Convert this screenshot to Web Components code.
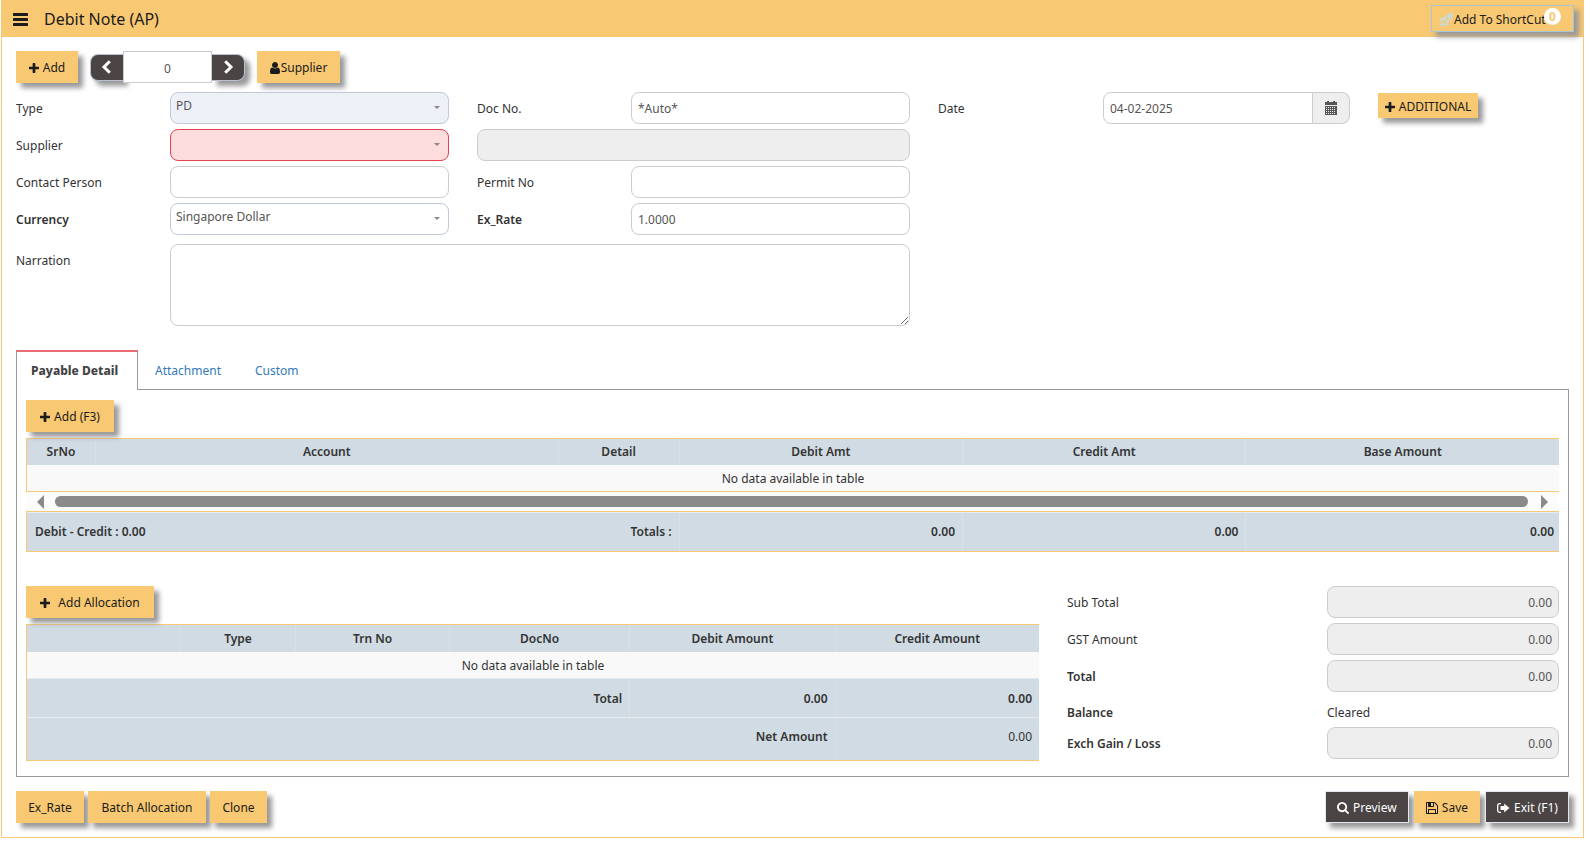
<!DOCTYPE html>
<html lang="en">
<head>
<meta charset="utf-8">
<title>Debit Note (AP)</title>
<style>
  html, body { margin: 0; background: #fff; }
  body { padding: 0 6px 0 1px; font: 12px/16px "Noto Sans", "Open Sans", sans-serif; color: #333; }
</style>
</head>
<body>
<debit-note-page></debit-note-page>

<script>
const define = (name, html, setup) => {
  const template = document.createElement('template');
  template.innerHTML = `<style>*{box-sizing:border-box}:host{box-sizing:border-box}</style>` + html;
  customElements.define(name, class extends HTMLElement {
    constructor() {
      super();
      this.attachShadow({ mode: 'open' }).append(template.content.cloneNode(true));
    }
    connectedCallback() { if (setup) setup(this, this.shadowRoot); }
  });
};

/* name: [viewBox, shapes, drawn width] */
const ICONS = {
  plus: ['192 64 1408 1536', '<path d="M1600 736v192q0 40-28 68t-68 28h-416v416q0 40-28 68t-68 28h-192q-40 0-68-28t-28-68v-416h-416q-40 0-68-28t-28-68v-192q0-40 28-68t68-28h416v-416q0-40 28-68t68-28h192q40 0 68 28t28 68v416h416q40 0 68 28t28 68z"/>', 10],
  bars: ['0 0 18 18', '<rect x="1" y="3" width="15" height="3" rx=".5"/><rect x="1" y="8" width="15" height="3" rx=".5"/><rect x="1" y="13" width="15" height="3" rx=".5"/>'],
  user: ['256 128 1280 1536', '<path d="M1536 1399q0 109-62.5 187t-150.5 78h-854q-88 0-150.5-78t-62.5-187q0-85 8.5-160.5t31.5-152 58.5-131 94-89 134.5-34.5q131 128 313 128t313-128q76 0 134.5 34.5t94 89 58.5 131 31.5 152 8.5 160.5zm-256-887q0 159-112.5 271.5t-271.5 112.5-271.5-112.5-112.5-271.5 112.5-271.5 271.5-112.5 271.5 112.5 112.5 271.5z"/>', 10],
  search: ['64 128 1664 1664', '<path d="M1216 832q0-185-131.5-316.5t-316.5-131.5-316.5 131.5-131.5 316.5 131.5 316.5 316.5 131.5 316.5-131.5 131.5-316.5zm512 832q0 52-38 90t-90 38q-54 0-90-38l-343-342q-179 124-399 124-143 0-273.5-55.5t-225-150-150-225-55.5-273.5 55.5-273.5 150-225 225-150 273.5-55.5 273.5 55.5 225 150 150 225 55.5 273.5q0 220-124 399l343 343q37 37 37 90z"/>', 12],
  save: ['128 128 1536 1536', '<path d="M512 1536h768v-384h-768v384zm896 0h128v-896q0-14-10-38.5t-20-34.5l-281-281q-10-10-34-20t-39-10v416q0 40-28 68t-68 28h-576q-40 0-68-28t-28-68v-416h-128v1280h128v-416q0-40 28-68t68-28h832q40 0 68 28t28 68v416zm-384-928v-320q0-13-9.5-22.5t-22.5-9.5h-192q-13 0-22.5 9.5t-9.5 22.5v320q0 13 9.5 22.5t22.5 9.5h192q13 0 22.5-9.5t9.5-22.5zm640 32v928q0 40-28 68t-68 28h-1344q-40 0-68-28t-28-68v-1344q0-40 28-68t68-28h928q40 0 88 20t76 48l280 280q28 28 48 76t20 88z"/>', 12],
  exit: ['0 0 14 14', '<path d="M5 2.700H3.400Q1.700 2.700 1.700 4.400v5.200q0 1.700 1.700 1.700H5" fill="none" stroke="currentColor" stroke-width="1.300"/><path d="M8.200 2.600 13.400 7 8.200 11.400V9H4.500V5h3.700z"/>'],
  left: ['0 0 14 14', '<path d="M9.800 1.200 4 7l5.800 5.800" fill="none" stroke="currentColor" stroke-width="3"/>'],
  right: ['0 0 14 14', '<path d="M4.200 1.200 10 7l-5.800 5.800" fill="none" stroke="currentColor" stroke-width="3"/>'],
  calendar: ['0 0 14 14', '<path d="M1 1h2V0h2v1h4V0h2v1h2v3H1z"/><path fill-rule="evenodd" d="M1 5h12v9H1zM2 6v1h1V6zm2 0v1h1V6zm2 0v1h1V6zm2 0v1h1V6zm2 0v1h1V6zM2 8v1h1V8zm2 0v1h1V8zm2 0v1h1V8zm2 0v1h1V8zm2 0v1h1V8zM2 10v1h1v-1zm2 0v1h1v-1zm2 0v1h1v-1zm2 0v1h1v-1zm2 0v1h1v-1zM2 12v1h1v-1zm2 0v1h1v-1zm2 0v1h1v-1zm2 0v1h1v-1zm2 0v1h1v-1z"/>'],
  rocket: ['0 0 14 14', '<g fill="none" stroke="currentColor" stroke-width="1.400"><path d="M13 1Q8 1 5.500 5.500L8.500 8.500Q13 6 13 1z"/><path d="M5.500 5.500H3L1.500 7.500l3 .5M8.500 8.500V11L6.500 12.500 6 9.500"/><path d="M3.500 9.500 1 13l3.500-2"/><circle cx="10" cy="4" r="1"/></g>'],
};

define('app-icon', `
<style>
  :host { display: inline-block; width: 14px; height: 14px; flex: none; }
  svg { display: block; width: 100%; height: 100%; fill: currentColor; }
</style>
<svg aria-hidden="true"></svg>`, (el, root) => {
  const [box, shapes, width] = ICONS[el.getAttribute('name')];
  const svg = root.querySelector('svg');
  svg.setAttribute('viewBox', box);
  svg.innerHTML = shapes;
  if (width) el.style.width = width + 'px';
});

define('app-button', `
<style>
  :host { display: inline-flex; color: #1b1b1b; }
  button { display: flex; align-items: center; justify-content: center; gap: 4px; height: 32px; min-width: var(--w, 0); margin: 0; padding: 2px 11px 0;
    border: 1px solid #f8c872; background: #f8c872; color: inherit; font: inherit; white-space: nowrap;
    box-shadow: 5px 5px 5px #999; }
  :host([dark]) { color: #fff; }
  :host([dark]) button { background: #4a4444; border-color: #e4e8ee; padding: 2px 9px 0; }
  :host([small]) button { height: 25px; padding: 2px 4px 0; }
  :host([tight]) button { gap: 1px; }
  :host([loose]) button { gap: 8px; }
</style>
<button type="button"><slot name="icon"></slot><slot></slot></button>`);

define('shortcut-button', `
<style>
  :host { display: block; color: #1b1b1b; }
  button { position: relative; display: flex; align-items: center; gap: 1px; height: 27px; width: 143px; padding: 2px 0 0 7px;
    border: 1px solid #a6c6d4; background: #f8c872; color: inherit; font: inherit; white-space: nowrap; box-shadow: 5px 5px 5px #999; }
  app-icon { color: #c3dbe8; }
  .badge { position: absolute; right: 12px; top: 2px; width: 17px; height: 17px; border-radius: 9px; background: #fff;
    color: #f8c872; font-weight: 700; line-height: 17px; text-align: center; }
</style>
<button type="button"><app-icon name="rocket"></app-icon>Add To ShortCut<span class="badge">0</span></button>`);

define('page-header', `
<style>
  :host { display: flex; align-items: center; height: 37px; padding: 0 10px; background: #f8c872; color: #1b1b1b; }
  .menu { border: 0; background: none; padding: 0; margin: 0 14px 0 0; color: inherit; display: flex; }
  .menu app-icon { width: 18px; height: 18px; }
  h1 { flex: 1; margin: 0; font-size: 16px; line-height: 22px; font-weight: 400; }
</style>
<button class="menu" type="button" aria-label="Menu"><app-icon name="bars"></app-icon></button>
<h1><slot></slot></h1>
<shortcut-button></shortcut-button>`);

define('record-pager', `
<style>
  :host { display: flex; align-items: center; }
  button { display: flex; align-items: center; justify-content: center; width: 33px; height: 27px; padding: 0; margin: 0;
    border: 1px solid #b9c0d4; background: #4a4444; color: #fff; box-shadow: 5px 5px 5px #999; }
  .prev { border-radius: 8px 0 0 8px; border-right: 0; }
  .next { border-radius: 0 8px 8px 0; border-left: 0; }
  input { position: relative; width: 89px; height: 32px; margin: 0; padding: 2px 0 0; border: 1px solid #ccc; background: #fff;
    color: #555; font: inherit; text-align: center; }
</style>
<button class="prev" type="button" aria-label="Previous"><app-icon name="left"></app-icon></button>
<input type="text" value="0" aria-label="Record number">
<button class="next" type="button" aria-label="Next"><app-icon name="right"></app-icon></button>`);

const CONTROL = `
  input, select, textarea { display: block; width: 100%; min-width: 0; height: 32px; margin: 0; padding: 0 6px; border: 1px solid #ccc;
    border-radius: 8px; background: #fff; color: #555; font: inherit; outline: 0; }
  input:disabled { background: #eee; color: #555; opacity: 1; }`;

define('form-field', `
<style>
  :host { display: grid; grid-template-columns: 154fr 279fr; align-items: center; }
  label { padding-top: 2px; }
  :host([wide]) { grid-template-columns: 154fr 740fr; align-items: start; grid-column: 1 / span 2; margin-top: 4px; }
  :host([wide]) label { padding-top: 9px; }
  :host([bare]) { grid-template-columns: 1fr; }
  :host([date]) { grid-template-columns: 165fr 247fr; }
  :host([total]) { grid-template-columns: 260fr 232fr; }
  :host([strong]) label { font-weight: 600; }
  ${CONTROL}
  .control { position: relative; display: flex; min-width: 0; }
  select { appearance: none; border-color: #c0c8dc; padding: 0 24px 5px 5px; }
  .caret { position: absolute; right: 9px; top: 14px; border: 3px solid transparent; border-top-color: #888; border-bottom: 0; pointer-events: none; }
  :host([locked]) select { background: #edf1f7; }
  :host([invalid]) select { background: #fcdcdc; border-color: #e8404c; }
  :host([total]) input { text-align: right; }
  textarea { height: 82px; padding: 6px; resize: both; }
  .pick { display: flex; flex: none; align-items: center; justify-content: center; width: 37px; margin: 0; padding: 0; border: 1px solid #ccc; border-left: 0;
    border-radius: 0 8px 8px 0; background: #eee; color: #555; }
  :host([date]) input { border-radius: 8px 0 0 8px; }
  :host([text]) { height: 25px; }
  :host([text]) label, output { padding-top: 6px; }
</style>
<label for="c"></label><div class="control"></div>`, (el, root) => {
  const label = root.querySelector('label'), box = root.querySelector('.control');
  const text = el.getAttribute('label'), value = el.getAttribute('value') || '';
  const tag = el.hasAttribute('select') ? 'select' : el.hasAttribute('wide') ? 'textarea' : el.hasAttribute('text') ? 'output' : 'input';
  const control = document.createElement(tag);
  control.id = 'c';
  if (tag === 'select') { control.add(new Option(value, value)); }
  else if (tag === 'input') { control.type = 'text'; control.value = value; control.disabled = el.hasAttribute('off'); }
  else if (tag === 'output') control.textContent = value;
  box.replaceChildren(control);
  if (tag === 'select') box.insertAdjacentHTML('beforeend', '<span class="caret"></span>');
  if (el.hasAttribute('date')) box.insertAdjacentHTML('beforeend', '<button class="pick" type="button" aria-label="Choose date"><app-icon name="calendar"></app-icon></button>');
  if (el.hasAttribute('bare')) { label.remove(); control.setAttribute('aria-label', text); }
  else label.textContent = text;
});

define('note-form', `
<style>
  :host { display: grid; grid-template-columns: 433fr 433fr 412fr 191fr; gap: 5px 28px; }
  .first { grid-column: 1; }
  app-button { align-self: start; padding-top: 1px; --w: 100px; }
</style>
<form-field label="Type" value="PD" select locked></form-field>
<form-field label="Doc No." value="*Auto*"></form-field>
<form-field label="Date" value="04-02-2025" date></form-field>
<app-button small><app-icon slot="icon" name="plus"></app-icon>ADDITIONAL</app-button>
<form-field class="first" label="Supplier" select invalid></form-field>
<form-field label="Supplier name" bare off></form-field>
<form-field class="first" label="Contact Person"></form-field>
<form-field label="Permit No"></form-field>
<form-field class="first" label="Currency" value="Singapore Dollar" select strong></form-field>
<form-field label="Ex_Rate" value="1.0000" strong></form-field>
<form-field label="Narration" wide></form-field>`);

const TABLE = `
  :host { display: block; }
  table { width: 100%; table-layout: fixed; border-collapse: separate; border-spacing: 0; border-left: 1px solid #f8c872; }
  th, td { padding: 0; font-weight: 400; }
  thead th { height: 26px; background: #d0dbe3; border-right: 1px solid #dbe0e4; font-weight: 600; text-align: center; }
  thead th:last-child, tfoot td:last-child { border-right: 0; }
  tbody td { height: 26px; padding-top: 2px; background: #f9f9f9; text-align: center; }
  tfoot td { background: #d0dbe3; border-right: 1px solid #dbe0e4; font-weight: 600; text-align: right; padding: 0 7px; }`;

define('payable-table', `
<style>
  ${TABLE}
  .head, .foot { border-top: 1px solid #f8c872; border-bottom: 1px solid #f8c872; }
  .foot td { height: 39px; border-top: 1px solid #e6ecf2; }
  .foot td:first-child { text-align: left; border-right: 0; padding-left: 8px; }
  .foot td:last-child { padding-right: 5px; }
  .bar { display: flex; align-items: center; justify-content: space-between; gap: 11px; height: 19px; padding: 0 11px; background: #fcfcfc; }
  .thumb { flex: 1; height: 11px; border-radius: 6px; background: #8a8a8a; }
  .arrow { border: 7px solid transparent; border-left-width: 0; border-right-color: #8a8a8a; }
  .arrow.r { border-left: 7px solid #8a8a8a; border-right-width: 0; margin-left: 2px; }
</style>
<table class="head">
  <colgroup><col style="width:4.500%"><col style="width:30.200%"><col style="width:7.900%"><col style="width:18.500%"><col style="width:18.500%"><col></colgroup>
  <thead><tr><th>SrNo</th><th>Account</th><th>Detail</th><th>Debit Amt</th><th>Credit Amt</th><th>Base Amount</th></tr></thead>
  <tbody><tr><td colspan="6">No data available in table</td></tr></tbody>
</table>
<div class="bar"><span class="arrow"></span><span class="thumb"></span><span class="arrow r"></span></div>
<table class="foot">
  <colgroup><col style="width:34.700%"><col style="width:7.900%"><col style="width:18.500%"><col style="width:18.500%"><col></colgroup>
  <tfoot><tr><td>Debit - Credit : 0.00</td><td>Totals :</td><td>0.00</td><td>0.00</td><td>0.00</td></tr></tfoot>
</table>`);

define('allocation-table', `
<style>
  ${TABLE}
  table { border-top: 1px solid #f8c872; border-bottom: 1px solid #f8c872; }
  thead th { height: 27px; }
  tfoot td { border-top: 1px solid #e6ecf2; height: 39px; padding: 1px 7px 0; }
  tfoot tr + tr td { height: 43px; padding-bottom: 6px; }
  tfoot .plain { font-weight: 400; }
</style>
<table>
  <colgroup><col style="width:15.200%"><col style="width:11.400%"><col style="width:15.200%"><col style="width:17.800%"><col style="width:20.300%"><col></colgroup>
  <thead><tr><th></th><th>Type</th><th>Trn No</th><th>DocNo</th><th>Debit Amount</th><th>Credit Amount</th></tr></thead>
  <tbody><tr><td colspan="6">No data available in table</td></tr></tbody>
  <tfoot>
    <tr><td colspan="4">Total</td><td>0.00</td><td>0.00</td></tr>
    <tr><td colspan="5">Net Amount</td><td class="plain">0.00</td></tr>
  </tfoot>
</table>`);

define('tab-panel', `
<style>
  :host { display: block; }
  nav { display: flex; align-items: stretch; height: 40px; position: relative; margin-bottom: -1px; z-index: 1; }
  a { display: flex; align-items: center; color: #337ab7; text-decoration: none; padding: 2px 17px 0; }
  a.on { border: 1px solid #999; border-top: 2px solid #ec6b73; border-bottom: 0; background: #fff; color: #444; font-weight: 800; padding: 0 14px; min-width: 122px; }
  .body { border: 1px solid #999; padding: 10px 9px 15px; }
</style>
<nav><a class="on" href="#payable">Payable Detail</a><a href="#attachment">Attachment</a><a href="#custom">Custom</a></nav>
<div class="body"><slot></slot></div>`);

define('debit-note-page', `
<style>
  :host { display: block; border: 1px solid #f8c872; border-top: 0; }
  page-header { margin: 0 -1px; padding-left: 11px; }
  main { padding: 14px; }
  .tools { display: flex; align-items: center; gap: 12px; margin-bottom: 9px; }
  tab-panel { margin-top: 24px; }
  payable-table { margin-top: 6px; }
  .lower { display: grid; grid-template-columns: 1013fr 492fr; gap: 28px; margin-top: 34px; }
  allocation-table { margin-top: 6px; }
  .totals { display: grid; align-content: start; gap: 5px; }
  footer { display: flex; justify-content: space-between; margin-top: 14px; }
  .group { display: flex; gap: 4px; }
  .group.end { gap: 5px; }
  .w57 { --w: 57px; } .w62 { --w: 62px; } .w66 { --w: 66px; } .w68 { --w: 68px; } .w83 { --w: 83px; } .w84 { --w: 84px; }
  .w88 { --w: 88px; } .w118 { --w: 118px; } .w128 { --w: 128px; }
</style>
<page-header>Debit Note (AP)</page-header>
<main>
  <div class="tools">
    <app-button class="w62"><app-icon slot="icon" name="plus"></app-icon>Add</app-button>
    <record-pager></record-pager>
    <app-button class="w83" tight><app-icon slot="icon" name="user"></app-icon>Supplier</app-button>
  </div>
  <note-form></note-form>
  <tab-panel>
    <app-button class="w88"><app-icon slot="icon" name="plus"></app-icon>Add (F3)</app-button>
    <payable-table></payable-table>
    <div class="lower">
      <div>
        <app-button class="w128" loose><app-icon slot="icon" name="plus"></app-icon>Add Allocation</app-button>
        <allocation-table></allocation-table>
      </div>
      <div class="totals">
        <form-field label="Sub Total" value="0.00" total off></form-field>
        <form-field label="GST Amount" value="0.00" total off></form-field>
        <form-field label="Total" value="0.00" total off strong></form-field>
        <form-field label="Balance" value="Cleared" total text strong></form-field>
        <form-field label="Exch Gain / Loss" value="0.00" total off strong></form-field>
      </div>
    </div>
  </tab-panel>
  <footer>
    <div class="group">
      <app-button class="w68">Ex_Rate</app-button>
      <app-button class="w118">Batch Allocation</app-button>
      <app-button class="w57">Clone</app-button>
    </div>
    <div class="group end">
      <app-button class="w84" dark><app-icon slot="icon" name="search"></app-icon>Preview</app-button>
      <app-button class="w66"><app-icon slot="icon" name="save"></app-icon>Save</app-button>
      <app-button class="w84" dark><app-icon slot="icon" name="exit"></app-icon>Exit (F1)</app-button>
    </div>
  </footer>
</main>`);
</script>
</body>
</html>
